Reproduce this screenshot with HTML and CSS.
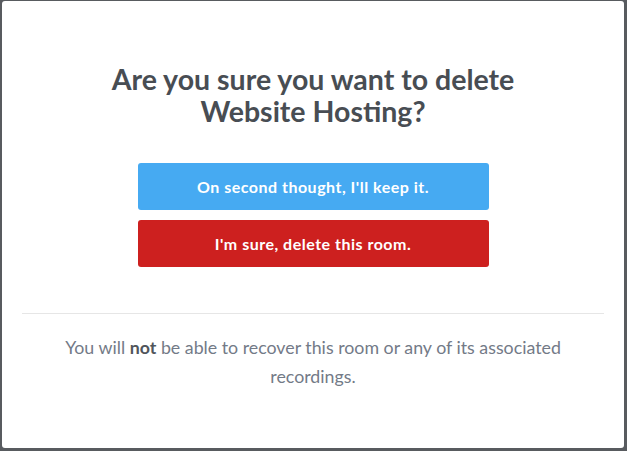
FILE: index.html
```html
<!DOCTYPE html>
<html lang="en">
<head>
    <meta charset="UTF-8">
    <title>Delete room</title>
    <link rel="stylesheet" href="styles.css">
</head>
<body>
    <div class="modal">
        <h2 class="modal-title">Are you sure you want to delete<br>Website Hosting?</h2>
        <div class="actions">
            <button class="btn btn-keep">On second thought, I'll keep it.</button>
            <button class="btn btn-delete">I'm sure, delete this room.</button>
        </div>
        <div class="modal-footer">
            <p>You will <strong>not</strong> be able to recover this room or any of its associated recordings.</p>
        </div>
    </div>
</body>
</html>
```

FILE: styles.css
```css
html, body {
    height: 100%;
}

body {
    margin: 0;
    padding: 1px 3px 3px 2px;
    box-sizing: border-box;
    background-color: #585b5f;
    font-family: 'Lato', sans-serif;
}

.modal {
    height: 100%;
    background-color: #fff;
    border-radius: 3px;
    padding: 0 20px;
    box-sizing: border-box;
    display: flex;
    flex-direction: column;
}

.modal-title {
    margin: 62px 0 0;
    text-align: center;
    font-size: 28.5px;
    line-height: 32px;
    font-weight: 700;
    color: #484d53;
}

.actions {
    display: flex;
    flex-direction: column;
    align-items: center;
    gap: 10px;
    margin-top: 36px;
}

.btn {
    width: 351px;
    height: 47px;
    border: none;
    border-radius: 3px;
    color: #fff;
    font-family: inherit;
    font-size: 16px;
    font-weight: 700;
    letter-spacing: 0.5px;
}

.btn-keep {
    background-color: #46aaf2;
}

.btn-delete {
    background-color: #cd201f;
}

.modal-footer {
    margin-top: 46px;
    border-top: 1px solid #e6e6e6;
    padding: 19px 25px 0;
}

.modal-footer p {
    margin: 0;
    text-align: center;
    font-size: 17.8px;
    line-height: 29px;
    color: #737a87;
}

.modal-footer strong {
    color: #50555b;
}
```
